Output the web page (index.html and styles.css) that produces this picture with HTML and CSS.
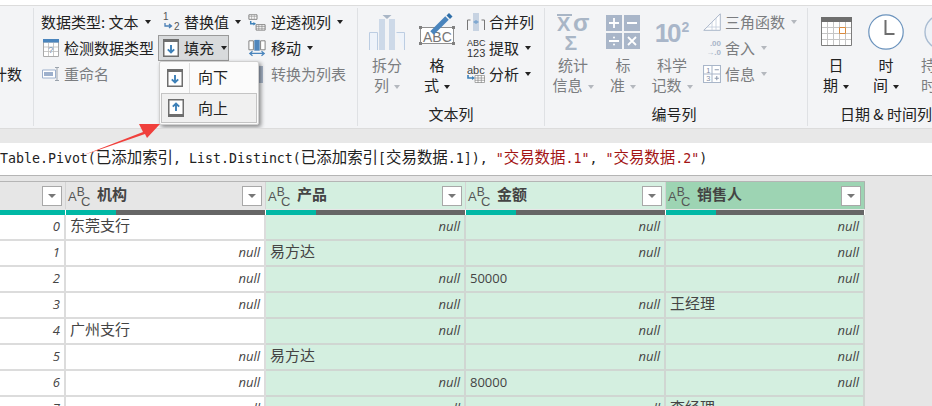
FILE: index.html
```html
<!DOCTYPE html>
<html lang="zh-CN">
<head>
<meta charset="utf-8">
<title>Power Query</title>
<link rel="stylesheet" href="styles.css">
</head>
<body>
<div class="page">
  <div class="ribbon">
    <section class="group g0">
      <div class="count-label">计数</div>
    </section>

    <section class="group g1">
      <div class="small-grid">
        <div class="tool c1"><span>数据类型: 文本</span><i class="caret"></i></div>
        <div class="tool c2">
          <svg class="ico i-replace" viewBox="0 0 20 20"><text x="1" y="8" class="svgnum">1</text><path d="M3 11v3h6M7 12l2.500 2-2.500 2" fill="none" stroke="#4a7fb5" stroke-width="1.300"/><text x="12" y="18" class="svgnum">2</text></svg>
          <span>替换值</span><i class="caret"></i>
        </div>
        <div class="tool c3">
          <svg class="ico i-unpivot" viewBox="0 0 20 18"><path d="M1 1h9v5H1z" fill="#fff" stroke="#777"/><path d="M1 3h9M4 1v5M7 1v5" stroke="#999" stroke-width=".7"/><path d="M3 8v3h4" fill="none" stroke="#3d80b8" stroke-width="1.600"/><path d="M6 9l3 2-3 2z" fill="#3d80b8"/><path d="M9 12h10v6H9z" fill="#fff" stroke="#777"/><path d="M9 14h10M9 16h10M12 12v6M15.500 12v6" stroke="#888" stroke-width=".7"/></svg>
          <span>逆透视列</span><i class="caret"></i>
        </div>

        <div class="tool c1 detect">
          <svg class="ico i-detect" viewBox="0 0 16 18"><path d="M.5 3h15v14.500H.5z" fill="#fff" stroke="#aaa"/><path d="M0 0h16v3.500H0z" fill="#4a85bd"/><path d="M5.500 4v13M10.500 4v13M1 8h14M1 12.500h14" stroke="#bbb" stroke-width=".8"/><text x="5.300" y="14" class="svgq">?</text></svg>
          <span>检测数据类型</span>
        </div>
        <div class="tool c2 fill-btn">
          <svg class="ico i-fill" viewBox="0 0 16 18"><path d="M0 0h16v18H0z" fill="#6e6e6e"/><path d="M1.500 3h13v13.500h-13z" fill="#fff"/><path d="M8 6v7.500M4.800 10.300L8 13.500l3.200-3.200" fill="none" stroke="#3d80b8" stroke-width="1.900"/></svg>
          <span>填充</span><i class="caret"></i>
        </div>
        <div class="tool c3">
          <svg class="ico i-move" viewBox="0 0 20 18"><path d="M1 1h5v10H1zM14 1h5v10h-5z" fill="#fff" stroke="#777"/><path d="M7 0h6v12H7z" fill="#4f86bc"/><path d="M2 15h16M5 12.500L2 15l3 2.500M15 12.500l3 2.500-3 2.500" fill="none" stroke="#4a85bd" stroke-width="1.400"/></svg>
          <span>移动</span><i class="caret"></i>
        </div>

        <div class="tool c1 off rename">
          <svg class="ico i-rename" viewBox="0 0 18 14"><path d="M.5 3h13v8H.5z" fill="#fff" stroke="#9db0cc"/><path d="M2 5h9v4H2z" fill="#9db0cc"/><path d="M13 .5h4M13 13.500h4M15 .5v13" fill="none" stroke="#9ba3ad"/></svg>
          <span>重命名</span>
        </div>
        <div class="tool c2"></div>
        <div class="tool c3 off to-list"><i class="list-ico"></i><span>转换为列表</span></div>
      </div>
      <div class="group-label"></div>

      <div class="menu">
        <div class="menu-item">
          <span class="menu-icon">
            <svg class="i-menu" viewBox="0 0 16 18"><path d="M0 0h16v18H0z" fill="#6e6e6e"/><path d="M1.500 3h13v13.500h-13z" fill="#fff"/><path d="M8 6v7.500M4.800 10.300L8 13.500l3.200-3.200" fill="none" stroke="#3d80b8" stroke-width="1.900"/></svg>
          </span>
          <span class="menu-text">向下</span>
        </div>
        <div class="menu-item active">
          <span class="menu-icon">
            <svg class="i-menu" viewBox="0 0 16 18"><path d="M0 0h16v18H0z" fill="#6e6e6e"/><path d="M1.500 1.500h13V15h-13z" fill="#fff"/><path d="M8 12V4.500M4.800 7.700L8 4.500l3.200 3.200" fill="none" stroke="#3d80b8" stroke-width="1.900"/></svg>
          </span>
          <span class="menu-text">向上</span>
        </div>
      </div>
    </section>

    <section class="group g2">
      <div class="cols">
        <div class="big off w-split">
          <svg class="big-ico split" viewBox="0 0 36 36"><path d="M.5 36V18.500h8V36M27.500 18.500h8V36" fill="#eef3fa" stroke="#bccde2"/><path d="M10 5h6v31h-6zM20 5h6v31h-6z" fill="#cdd9e8"/><path d="M13.500 1h9L18 5z" fill="#a9b6c6"/></svg>
          <div class="big-text">拆分<br>列<i class="caret grey"></i></div>
        </div>
        <div class="big w-format">
          <svg class="big-ico fmt" viewBox="0 0 36 32"><path d="M1.500 14.500h33v16h-33z" fill="#fff" stroke="#8f8f8f"/><g fill="#808080"><rect y="13" width="3" height="3"/><rect x="33" y="13" width="3" height="3"/><rect y="29" width="3" height="3"/><rect x="33" y="29" width="3" height="3"/></g><text x="4" y="28.500" class="svgabc">ABC</text><path d="M13 20L28 5" stroke="#4a85bd" stroke-width="5"/><path d="M27.500 2.500l2.500-2.500 3.500 3.500-2.500 2.500z" fill="#2f6ea8"/></svg>
          <div class="big-text">格<br>式<i class="caret"></i></div>
        </div>
        <div class="small-col">
          <div class="tool">
            <svg class="ico i-merge" viewBox="0 0 18 18"><path d="M.5 17V7h3M17.500 17V7h-3" fill="none" stroke="#777"/><path d="M6 0h6v18H6z" fill="#c7d3e2"/><path d="M6 9l3-2 3 2-3 2z" fill="#7fa7cf"/></svg>
            <span>合并列</span>
          </div>
          <div class="tool">
            <span class="abc-stack"><span class="abc-top">ABC</span><span class="abc-bot">123</span></span>
            <span>提取</span><i class="caret"></i>
          </div>
          <div class="tool">
            <span class="abc-wrap"><span class="abc-low">abc</span><svg class="i-parse" viewBox="0 0 18 8"><path d="M1 0v3h5" fill="none" stroke="#3d80b8" stroke-width="1.600"/><path d="M5 1l3 2-3 2z" fill="#3d80b8"/><path d="M8 .5h9.500v7H8zM8 3h10M8 5.300h10M11 0v8M14.300 0v8" fill="#fff" stroke="#888" stroke-width=".7"/></svg></span>
            <span>分析</span><i class="caret"></i>
          </div>
        </div>
      </div>
      <div class="group-label">文本列</div>
    </section>

    <section class="group g3">
      <div class="cols">
        <div class="big off w-stat">
          <svg class="big-ico stat" viewBox="0 0 36 38"><rect x="2" y="0" width="15" height="2" fill="#a9b6c6"/><text x="2" y="17" class="svgstat">X</text><text x="18" y="17" class="svgsig">σ</text><text x="9.500" y="36" class="svgstat big-s">Σ</text></svg>
          <div class="big-text">统计<br>信息<i class="caret grey"></i></div>
        </div>
        <div class="big off w-std">
          <svg class="big-ico std" viewBox="0 0 34 34"><rect width="16" height="16" fill="#a9b6c9"/><rect x="18" width="16" height="16" fill="#a9b6c9"/><rect y="18" width="16" height="16" fill="#a9b6c9"/><rect x="18" y="18" width="16" height="16" fill="#a9b6c9"/><path d="M3 8h10M8 3v10M21 8h10M3 26h10M22 22l8 8M30 22l-8 8" stroke="#fff" stroke-width="1.800"/><circle cx="8" cy="22.500" r="1" fill="#fff"/><circle cx="8" cy="29.500" r="1" fill="#fff"/></svg>
          <div class="big-text">标<br>准<i class="caret grey"></i></div>
        </div>
        <div class="big off w-sci">
          <div class="ten"><span>10</span><sup>2</sup></div>
          <div class="big-text">科学<br>记数<i class="caret grey"></i></div>
        </div>
        <div class="small-col off">
          <div class="tool">
            <svg class="ico i-tri" viewBox="0 0 18 18"><path d="M.8 17.300L17.300.8v16.500z" fill="#fff" stroke="#a9b6c9"/><path d="M9 17V9M13 17V5M4 14h13" stroke="#c2ccda" stroke-width=".8"/></svg>
            <span>三角函数</span><i class="caret grey"></i>
          </div>
          <div class="tool">
            <span class="round-ico">.00<br><b>→</b>.0</span>
            <span>舍入</span><i class="caret grey"></i>
          </div>
          <div class="tool">
            <svg class="ico i-tri" viewBox="0 0 17 17"><path d="M.5.5h16v16H.5z" fill="#fff" stroke="#a9b6c9"/><path d="M8.500 0v17M0 8.500h17" stroke="#a9b6c9"/><path d="M11 4.500h4M11 12.500h4M13 10.500v4" stroke="#8f9cb0"/><text x="3" y="7.500" class="svgtiny">1</text><text x="3" y="15.500" class="svgtiny">3</text></svg>
            <span>信息</span><i class="caret grey"></i>
          </div>
        </div>
      </div>
      <div class="group-label">编号列</div>
    </section>

    <section class="group g4">
      <div class="cols">
        <div class="big w-date">
          <svg class="big-ico cal" viewBox="0 0 31 29"><path d="M.5.500h30v28H.5z" fill="#fff" stroke="#7c7c7c"/><path d="M0 0h31v5H0z" fill="#6e6e6e"/><path d="M6.500 5v23M12.500 5v23M18.500 5v23M24.500 5v23M1 10.500h29M1 16.500h29M1 22.500h29" stroke="#c5c5c5"/><path d="M18.500 10.500h6v6h-6z" fill="#fff" stroke="#d98a3d"/></svg>
          <div class="big-text">日<br>期<i class="caret"></i></div>
        </div>
        <div class="big w-time">
          <svg class="big-ico clock" viewBox="0 0 36 36"><circle cx="18" cy="18" r="17.200" fill="#fff" stroke="#6b93bd" stroke-width="1.200"/><path d="M17.500 6v14h9" fill="none" stroke="#6e6e6e" stroke-width="2"/></svg>
          <div class="big-text">时<br>间<i class="caret"></i></div>
        </div>
        <div class="big off w-dur">
          <svg class="big-ico clock dur" viewBox="0 0 36 36"><circle cx="18" cy="18" r="17" fill="#eef2f7" stroke="#a9bcd2" stroke-width="1.400"/><path d="M18 7v11h8" fill="none" stroke="#b5bdc8" stroke-width="2"/></svg>
          <div class="big-text">持续<br>时间</div>
        </div>
      </div>
      <div class="group-label">日期 &amp; 时间列</div>
    </section>
  </div>

  <div class="band"></div>

  <div class="formula">Table.Pivot(<span class="cj">已添加索引</span>, List.Distinct(<span class="cj">已添加索引</span>[<span class="cj">交易数据</span>.1]), <span class="str">"<span class="cj">交易数据</span>.1"</span>, <span class="str">"<span class="cj">交易数据</span>.2"</span>)</div>

  <div class="table-area">
    <div class="table">
      <div class="hd idx-hd"><span class="spacer"></span><span class="filter"></span></div>
      <div class="hd"><span class="abc"><b>A</b><b>B</b><b>C</b></span><span class="hd-name">机构</span><span class="filter"></span></div>
      <div class="hd sel"><span class="abc"><b>A</b><b>B</b><b>C</b></span><span class="hd-name">产品</span><span class="filter"></span></div>
      <div class="hd sel"><span class="abc"><b>A</b><b>B</b><b>C</b></span><span class="hd-name">金额</span><span class="filter"></span></div>
      <div class="hd sel-strong"><span class="abc"><b>A</b><b>B</b><b>C</b></span><span class="hd-name">销售人</span><span class="filter"></span></div>

      <div class="bar"><i class="teal full"></i></div>
      <div class="bar"><i class="teal"></i></div>
      <div class="bar"><i class="teal"></i></div>
      <div class="bar"><i class="teal"></i></div>
      <div class="bar"><i class="teal"></i></div>

      <div class="c num">0</div><div class="c">东莞支行</div><div class="c g nul">null</div><div class="c g nul">null</div><div class="c g nul">null</div>
      <div class="c num">1</div><div class="c nul">null</div><div class="c g">易方达</div><div class="c g nul">null</div><div class="c g nul">null</div>
      <div class="c num">2</div><div class="c nul">null</div><div class="c g nul">null</div><div class="c g dig">50000</div><div class="c g nul">null</div>
      <div class="c num">3</div><div class="c nul">null</div><div class="c g nul">null</div><div class="c g nul">null</div><div class="c g">王经理</div>
      <div class="c num">4</div><div class="c">广州支行</div><div class="c g nul">null</div><div class="c g nul">null</div><div class="c g nul">null</div>
      <div class="c num">5</div><div class="c nul">null</div><div class="c g">易方达</div><div class="c g nul">null</div><div class="c g nul">null</div>
      <div class="c num">6</div><div class="c nul">null</div><div class="c g nul">null</div><div class="c g dig">80000</div><div class="c g nul">null</div>
      <div class="c num">7</div><div class="c nul">null</div><div class="c g nul">null</div><div class="c g nul">null</div><div class="c g">李经理</div>
    </div>
  </div>

  <svg class="arrow" viewBox="0 0 90 40"><path d="M1 35L63 11 59 3 80 3 67 17 65 13z" fill="#f0403c"/></svg>
</div>
</body>
</html>
```

FILE: styles.css
```css
* { box-sizing: border-box; }
html, body { margin: 0; padding: 0; }
body {
  width: 932px;
  height: 406px;
  overflow: hidden;
  background: #e6e6e6;
  font-family: "Noto Sans CJK SC", "Liberation Sans", sans-serif;
  font-size: 15px;
  color: #222;
}
.page {
  position: relative;
  width: 932px;
  height: 406px;
  overflow: hidden;
  display: flex;
  flex-direction: column;
}

/* ribbon */
.ribbon {
  display: flex;
  flex: none;
  height: 129px;
  background: #f3f4f6;
  border-top: 1px solid #fff;
  box-shadow: inset 0 4px 0 #fff, inset 0 5px 0 #dcdcdc;
  padding-top: 7px;
  border-bottom: 1px solid #dcdcdc;
  overflow: hidden;
}
.group {
  position: relative;
  display: flex;
  flex-direction: column;
  flex: none;
  height: 118px;
  border-right: 1px solid #dfe1e4;
}
.g0 { width: 34px; }
.g1 { width: 324px; }
.g2 { width: 187px; }
.g3 { width: 263px; }
.g4 { width: 240px; border-right: 0; }
.count-label {
  display: flex;
  justify-content: flex-end;
  margin-top: 53px;
  padding-right: 11px;
  line-height: 26px;
  white-space: nowrap;
}

.small-grid {
  display: grid;
  grid-template-columns: 119px 88px 96px;
  grid-auto-rows: 26px;
  padding: 1px 0 0 7px;
}
.tool {
  display: flex;
  align-items: center;
  gap: 4px;
  height: 26px;
  white-space: nowrap;
  line-height: 20px;
}
.caret {
  display: inline-block;
  width: 0;
  height: 0;
  margin-left: 5px;
  border-left: 3.500px solid transparent;
  border-right: 3.500px solid transparent;
  border-top: 4px solid #222;
  vertical-align: middle;
}
.tool .caret { margin-left: 2px; }
.caret.grey { border-top-color: #b4b8be; }
.off { color: #7b7d80; }
.ico { flex: none; }
.i-replace { width: 20px; height: 20px; margin-left: 2px; margin-right: -2px; }
.i-unpivot { width: 18px; height: 18px; margin-right: 1px; }
.i-detect { width: 16px; height: 18px; margin-left: 2px; }
.i-fill { width: 16px; height: 18px; }
.i-move { width: 18px; height: 18px; margin-right: 1px; }
.i-rename { width: 18px; height: 14px; margin-left: 1px; }
.detect { gap: 5px; }
.fill-btn {
  margin-left: -2px;
  width: 71px;
  padding-left: 4px;
  gap: 5px;
  background: #d8dadc;
  border: 1px solid #9a9a9a;
}
.to-list { padding-left: 11px; gap: 8px; }
.list-ico { flex: none; width: 4px; height: 17px; background: #a9b6c9; }
.svgnum { font: 10px "Liberation Sans", sans-serif; fill: #555; }
.svgq { font: 9px "Liberation Sans", sans-serif; fill: #7c98b6; }
.svgabc { font: 14px "Liberation Sans", sans-serif; fill: #777; }
.svgstat { font: 700 20px "Liberation Sans", sans-serif; fill: #a9b6c6; }
.svgstat.big-s { font-size: 21px; }
.svgsig { font: 700 24px "Liberation Sans", sans-serif; fill: #a9b6c6; }
.svgtiny { font: 7px "Liberation Sans", sans-serif; fill: #7f8da3; }
.group-label {
  margin-top: auto;
  text-align: center;
  line-height: 20px;
  height: 22px;
  white-space: nowrap;
}

/* dropdown */
.menu {
  position: absolute;
  left: 125px;
  top: 53px;
  width: 100px;
  height: 64px;
  background: #fbfbfb;
  border: 1px solid #d0d0d0;
  border-radius: 2px;
  box-shadow: 2px 2px 4px rgba(0,0,0,.45);
  padding: 1px;
  z-index: 3;
}
.menu-item { display: flex; height: 30px; align-items: stretch; }
.menu-item.active { background: #f0f0f0; border: 1px solid #c4c4c4; height: 30px; }
.menu-icon { width: 29px; display: flex; align-items: center; justify-content: center; border-right: 1px solid #dcdcdc; }
.menu-item.active .menu-icon { border-right: 0; width: 28px; }
.i-menu { width: 16px; height: 18px; }
.menu-text { padding-left: 8px; line-height: 28px; color: #222; }

/* large buttons */
.cols { display: flex; height: 91px; }
.big { flex: none; display: flex; flex-direction: column; align-items: center; }
.big-ico { flex: none; width: 38px; height: 38px; }
.big-text { text-align: center; line-height: 20px; margin-top: auto; margin-bottom: 4px; white-space: nowrap; }
.w-split { width: 50px; margin-left: 4px; }
.big-ico.split { width: 36px; height: 36px; margin-top: 6px; }
.w-format { width: 50px; }
.big-ico.fmt { width: 36px; height: 32px; margin-top: 5px; }
.small-col { margin-left: 5px; padding-top: 1px; }
.small-col .tool { gap: 4px; }
.i-merge { width: 18px; height: 18px; }
.abc-stack { display: block; width: 18px; font-family: "Liberation Sans", sans-serif; color: #333; }
.abc-top { display: block; font-size: 9px; line-height: 9px; }
.abc-bot { display: block; font-size: 11px; line-height: 10px; }
.abc-wrap { display: block; width: 18px; height: 18px; overflow: hidden; }
.abc-low { display: block; font: 11px/10px "Liberation Sans", sans-serif; color: #444; }
.i-parse { display: block; width: 18px; height: 8px; }

.w-stat { width: 56px; }
.big-ico.stat { width: 36px; height: 38px; margin-top: 6px; }
.w-std { width: 44px; }
.big-ico.std { width: 34px; height: 34px; margin-top: 7px; }
.w-sci { width: 54px; }
.ten {
  height: 38px;
  padding-top: 6px;
  color: #a9b6c9;
  font: 700 26px/38px "Liberation Sans", sans-serif;
  letter-spacing: -2px;
  white-space: nowrap;
}
.ten sup { font-size: 14px; line-height: 0; vertical-align: 10px; letter-spacing: 0; margin-left: 2px; }
.g3 .small-col { margin-left: 4px; }
.g3 .group-label { padding-right: 4px; }
.i-tri { width: 18px; height: 18px; }
.round-ico { display: block; width: 18px; font: 700 8px/9px "Liberation Sans", sans-serif; color: #a9b6c9; text-align: right; }
.round-ico b { font-weight: 700; }

.big-ico.cal { width: 31px; height: 29px; margin-top: 9px; }
.w-date { width: 50px; margin-left: 3px; }
.w-time { width: 50px; }
.big-ico.clock { width: 36px; height: 36px; margin-top: 6px; }
.big-ico.dur { margin-left: 12px; }
.w-dur { width: 50px; }
.g4 .group-label { text-align: left; padding-left: 32px; }

/* band + formula */
.band { flex: none; height: 14px; background: #e8e8e8; }
.formula {
  flex: none;
  height: 33px;
  padding-top: 2px;
  background: #fff;
  border-bottom: 1px solid #b5b5b5;
  font-family: "DejaVu Sans Mono", "Noto Sans CJK SC", monospace;
  font-size: 13.280px;
  line-height: 28px;
  white-space: nowrap;
  color: #222;
  overflow: hidden;
}
.cj { font-family: "Noto Sans CJK SC", sans-serif; font-size: 15.450px; line-height: 1; }
.str { color: #a31515; }

/* table */
.table-area { flex: 1; padding-top: 5px; overflow: hidden; }
.table {
  display: grid;
  width: 865px;
  grid-template-columns: 66px 200px 200px 200px 199px;
  grid-template-rows: 27px 6px;
  grid-auto-rows: 26px;
  border-top: 1px solid #b5b5b5;
}
.hd {
  height: 27px;
  display: flex;
  align-items: center;
  background: #e6e6e6;
  border-right: 1px solid #d4d4d4;
  padding: 0 3px 0 2px;
}
.hd.sel { background: #d4efe0; }
.hd.sel-strong { background: #9dd4b3; border-right: 1px solid #a8b5ac; }
.spacer { flex: 1; }
.abc {
  position: relative;
  flex: none;
  width: 20px;
  height: 20px;
  font: 13px/9px "Liberation Sans", sans-serif;
  color: #555;
}
.abc b { position: absolute; font-weight: 400; }
.abc b:nth-child(1) { left: 0; top: 6px; }
.abc b:nth-child(2) { left: 8.700px; top: 2px; font-size: 12px; }
.abc b:nth-child(3) { left: 13px; top: 11px; }
.hd-name { flex: 1; margin-left: 9px; font-weight: 700; color: #444; line-height: 20px; position: relative; top: -2px; }
.filter {
  position: relative;
  flex: none;
  width: 20px;
  height: 20px;
  background: #fff;
  border: 1px solid #a8a8a8;
}
.filter::after {
  content: "";
  position: absolute;
  left: 5px;
  top: 7px;
  border-left: 4px solid transparent;
  border-right: 4px solid transparent;
  border-top: 4px solid #777;
}
.bar {
  height: 5px;
  margin-top: 1px;
  background: #666;
  border-right: 1px solid #fff;
}
.teal { display: block; width: 50px; height: 5px; background: #00b8a5; }
.teal.full { width: 100%; }
.c {
  height: 26px;
  padding: 0 4px;
  line-height: 20px;
  background: #fff;
  color: #444;
  border-right: 2px solid #dcdcdc;
  border-bottom: 2px solid #dcdcdc;
  white-space: nowrap;
  overflow: hidden;
}
.c.g { background: #d4efe0; border-color: #d0d6d2; }
.nul, .num, .dig { font-family: "Open Sans", "Liberation Sans", sans-serif; font-size: 13px; color: #444; line-height: 23px; }
.nul, .num { text-align: right; font-style: italic; }

/* annotation */
.arrow {
  position: absolute;
  left: 80px;
  top: 121px;
  width: 90px;
  height: 40px;
  z-index: 5;
}
```
